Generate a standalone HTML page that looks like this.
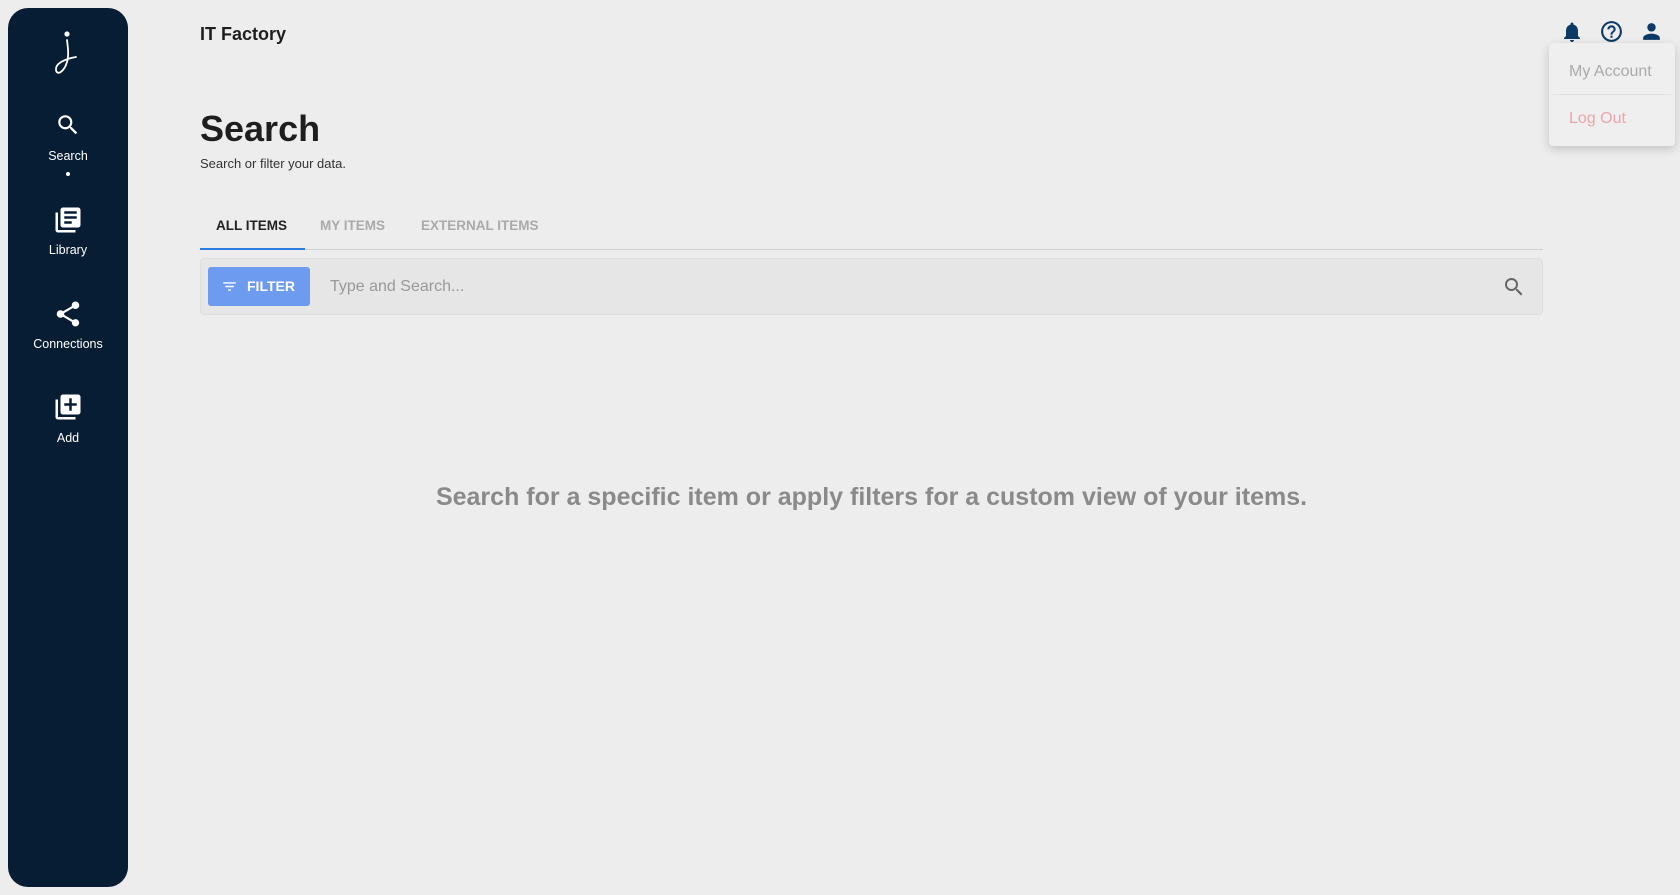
<!DOCTYPE html>
<html><head><meta charset="utf-8"><style>
*{box-sizing:border-box;margin:0;padding:0}
body{width:1680px;height:895px;background:#ededed;font-family:"Liberation Sans",Arial,sans-serif;position:relative;overflow:hidden}
.sb{position:absolute;left:8px;top:8px;width:120px;height:879px;background:#071d33;border-radius:20px}
.ab{position:absolute;left:0;width:136px;text-align:center;color:#fff;font-size:12.5px}
.ab svg{display:block;margin:0 auto}
.t{position:absolute}
</style></head><body>
<div class="sb"></div>
<svg class="t" style="left:52px;top:30px" width="32" height="48" viewBox="0 0 32 48"><circle cx="15" cy="4" r="2.6" fill="#fff"/><path d="M15 10 C16 18 17 26 15 32 C12 42 5 46 4 40 C3 34 12 29 24 27" stroke="#fff" stroke-width="1.8" fill="none" stroke-linecap="round"/></svg>
<div class="ab" style="top:112px"><svg width="26" height="26" viewBox="0 0 24 24"><path fill="#fff" d="M15.5 14h-.79l-.28-.27A6.47 6.47 0 0 0 16 9.5 6.5 6.5 0 1 0 9.5 16c1.61 0 3.09-.59 4.23-1.57l.27.28v.79l5 4.99L20.49 19l-4.99-5zm-6 0C7.01 14 5 11.99 5 9.5S7.01 5 9.5 5 14 7.01 14 9.5 11.99 14 9.5 14z"/></svg><div style="margin-top:11px">Search</div><div style="width:4px;height:4px;border-radius:2px;background:#fff;margin:9px auto 0"></div></div>
<div class="ab" style="top:205px"><svg width="30" height="30" viewBox="0 0 24 24"><path fill="#fff" d="M4 6H2v14c0 1.1.9 2 2 2h14v-2H4V6zm16-4H8c-1.1 0-2 .9-2 2v12c0 1.1.9 2 2 2h12c1.1 0 2-.9 2-2V4c0-1.1-.9-2-2-2zm-1 9H9V9h10v2zm-4 4H9v-2h6v2zm4-8H9V5h10v2z"/></svg><div style="margin-top:8px">Library</div></div>
<div class="ab" style="top:299px"><svg width="30" height="30" viewBox="0 0 24 24"><path fill="#fff" d="M18 16.08c-.76 0-1.440.3-1.96.77L8.91 12.7c.05-.23.09-.46.09-.7s-.04-.47-.09-.7l7.05-4.11c.54.5 1.25.81 2.04.81 1.66 0 3-1.34 3-3s-1.34-3-3-3-3 1.34-3 3c0 .24.04.47.09.7L8.04 9.810C7.5 9.31 6.79 9 6 9c-1.66 0-3 1.34-3 3s1.34 3 3 3c.79 0 1.5-.31 2.04-.81l7.12 4.16c-.05.21-.08.43-.08.65 0 1.61 1.31 2.92 2.92 2.92s2.92-1.31 2.92-2.92-1.31-2.92-2.92-2.92z"/></svg><div style="margin-top:8px">Connections</div></div>
<div class="ab" style="top:392px"><svg width="30" height="30" viewBox="0 0 24 24"><path fill="#fff" d="M4 6H2v14c0 1.1.9 2 2 2h14v-2H4V6zm16-4H8c-1.1 0-2 .9-2 2v12c0 1.1.9 2 2 2h12c1.1 0 2-.9 2-2V4c0-1.1-.9-2-2-2zm-1 9h-4v4h-2v-4H9V9h4V5h2v4h4v2z"/></svg><div style="margin-top:9px">Add</div></div>

<div class="t" style="left:200px;top:24px;font-size:18px;font-weight:bold;color:#1e1e1e">IT Factory</div>
<div class="t" style="left:200px;top:108px;font-size:36px;font-weight:bold;color:#1e1e1e">Search</div>
<div class="t" style="left:200px;top:156px;font-size:13px;color:#333">Search or filter your data.</div>
<div class="t" style="left:216px;top:218px;font-size:13.5px;font-weight:bold;color:#222">ALL ITEMS</div>
<div class="t" style="left:320px;top:218px;font-size:13.5px;font-weight:bold;color:#aaa">MY ITEMS</div>
<div class="t" style="left:421px;top:218px;font-size:13.5px;font-weight:bold;color:#aaa">EXTERNAL ITEMS</div>
<div class="t" style="left:200px;top:249px;width:1343px;height:1px;background:#cfcfcf"></div>
<div class="t" style="left:200px;top:248px;width:105px;height:2px;background:#2e7de0"></div>
<div class="t" style="left:200px;top:258px;width:1343px;height:57px;background:#e6e6e6;border:1px solid #ddd;border-radius:4px"></div>
<div class="t" style="left:208px;top:267px;width:102px;height:39px;background:#6d9bf0;border-radius:3px;color:#fff;font-size:14px;font-weight:bold;line-height:39px;padding-left:39px">FILTER</div>
<svg class="t" style="left:221px;top:278px" width="17" height="17" viewBox="0 0 24 24"><path fill="#fff" d="M10 18h4v-2h-4v2zM3 6v2h18V6H3zm3 7h12v-2H6v2z"/></svg>
<div class="t" style="left:330px;top:278px;font-size:16px;color:#999">Type and Search...</div>
<svg class="t" style="left:1502px;top:275px" width="24" height="24" viewBox="0 0 24 24"><path fill="#666" d="M15.5 14h-.79l-.28-.27A6.47 6.47 0 0 0 16 9.5 6.5 6.5 0 1 0 9.5 16c1.61 0 3.09-.59 4.23-1.57l.27.28v.79l5 4.99L20.49 19l-4.99-5zm-6 0C7.01 14 5 11.99 5 9.5S7.01 5 9.5 5 14 7.01 14 9.5 11.99 14 9.5 14z"/></svg>
<div class="t" style="left:200px;width:1343px;top:483px;text-align:center;font-size:25px;font-weight:bold;color:#8a8a8a">Search for a specific item or apply filters for a custom view of your items.</div>

<svg class="t" style="left:1560px;top:20px" width="24" height="24" viewBox="0 0 24 24"><path fill="#0b3a66" d="M12 22c1.1 0 2-.9 2-2h-4c0 1.1.89 2 2 2zm6-6v-5c0-3.07-1.64-5.64-4.5-6.32V4c0-.83-.67-1.5-1.5-1.5s-1.5.67-1.5 1.5v.68C7.63 5.36 6 7.920 6 11v5l-2 2v1h16v-1l-2-2z"/></svg>
<svg class="t" style="left:1599px;top:19px" width="25" height="25" viewBox="0 0 24 24"><path fill="#0b3a66" d="M11 18h2v-2h-2v2zm1-16C6.48 2 2 6.48 2 12s4.48 10 10 10 10-4.48 10-10S17.52 2 12 2zm0 18c-4.41 0-8-3.59-8-8s3.59-8 8-8 8 3.59 8 8-3.59 8-8 8zm0-14c-2.21 0-4 1.79-4 4h2c0-1.1.9-2 2-2s2 .9 2 2c0 2-3 1.75-3 5h2c0-2.25 3-2.5 3-5 0-2.21-1.79-4-4-4z"/></svg>
<svg class="t" style="left:1639px;top:19px" width="25" height="25" viewBox="0 0 24 24"><path fill="#0b3a66" d="M12 12c2.21 0 4-1.79 4-4s-1.79-4-4-4-4 1.79-4 4 1.79 4 4 4zm0 2c-2.67 0-8 1.34-8 4v2h16v-2c0-2.66-5.33-4-8-4z"/></svg>
<div class="t" style="left:1549px;top:43px;width:126px;height:103px;background:#efefef;border-radius:4px;box-shadow:0 3px 10px rgba(0,0,0,.18)">
<div style="position:absolute;left:20px;top:20px;font-size:16px;color:#aaa">My Account</div>
<div style="position:absolute;left:4px;right:4px;top:51px;height:1px;background:#e2e2e2"></div>
<div style="position:absolute;left:20px;top:67px;font-size:16px;color:#eaa5ad">Log Out</div>
</div>
</body></html>
